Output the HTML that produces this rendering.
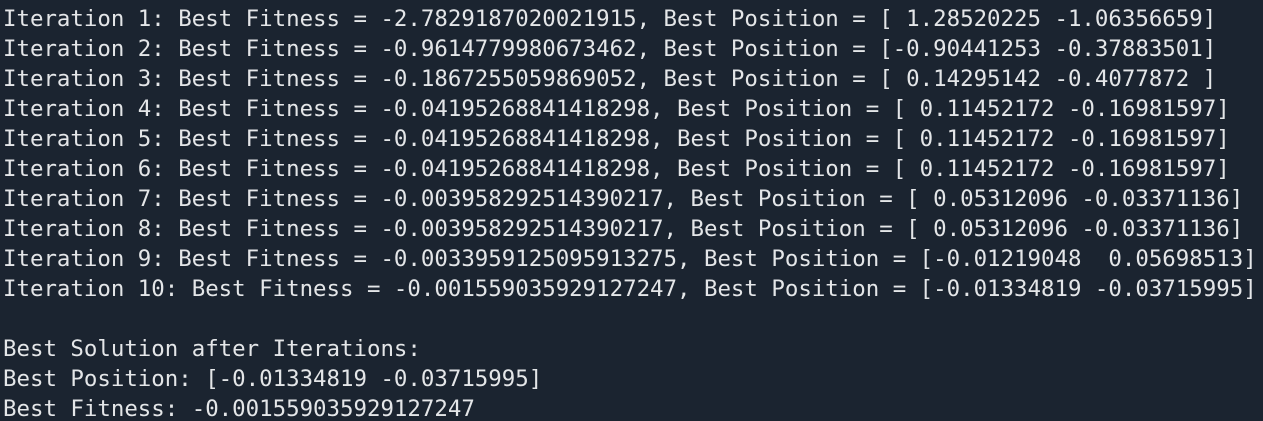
<!DOCTYPE html>
<html><head><style>
html,body{margin:0;padding:0;background:#1b2430;width:1263px;height:421px;overflow:hidden}
pre{margin:0;padding:4px 0 0 3px;font-family:"DejaVu Sans Mono","Liberation Mono",monospace;font-size:22.4px;line-height:30px;color:#e4e6e8;white-space:pre}
</style></head><body><pre>Iteration 1: Best Fitness = -2.7829187020021915, Best Position = [ 1.28520225 -1.06356659]
Iteration 2: Best Fitness = -0.9614779980673462, Best Position = [-0.90441253 -0.37883501]
Iteration 3: Best Fitness = -0.1867255059869052, Best Position = [ 0.14295142 -0.4077872 ]
Iteration 4: Best Fitness = -0.04195268841418298, Best Position = [ 0.11452172 -0.16981597]
Iteration 5: Best Fitness = -0.04195268841418298, Best Position = [ 0.11452172 -0.16981597]
Iteration 6: Best Fitness = -0.04195268841418298, Best Position = [ 0.11452172 -0.16981597]
Iteration 7: Best Fitness = -0.003958292514390217, Best Position = [ 0.05312096 -0.03371136]
Iteration 8: Best Fitness = -0.003958292514390217, Best Position = [ 0.05312096 -0.03371136]
Iteration 9: Best Fitness = -0.0033959125095913275, Best Position = [-0.01219048  0.05698513]
Iteration 10: Best Fitness = -0.001559035929127247, Best Position = [-0.01334819 -0.03715995]

Best Solution after Iterations:
Best Position: [-0.01334819 -0.03715995]
Best Fitness: -0.001559035929127247</pre></body></html>
